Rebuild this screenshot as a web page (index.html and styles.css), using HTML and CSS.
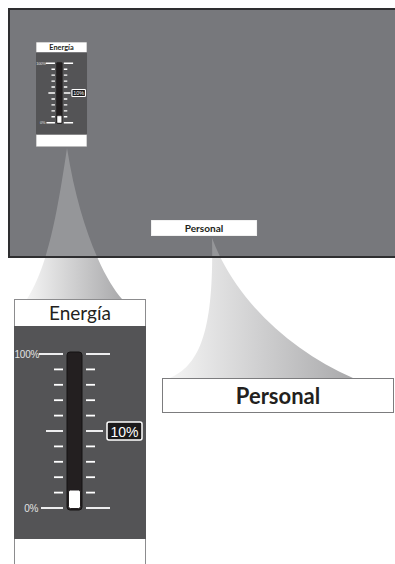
FILE: index.html
```html
<!DOCTYPE html>
<html lang="es">
<head>
    <meta charset="UTF-8">
    <meta name="viewport" content="width=device-width, initial-scale=1.0">
    <title>Energía - Personal</title>
    <link rel="stylesheet" href="styles.css">
</head>
<body>
    <!-- Conos de ampliación entre la pantalla y los detalles -->
    <svg class="cones" width="395" height="564" viewBox="0 0 395 564">
        <defs>
            <linearGradient id="cone-left" gradientUnits="userSpaceOnUse" x1="27" y1="0" x2="122" y2="0">
                <stop offset="0" stop-color="#f4f4f4"/>
                <stop offset="1" stop-color="#a9a9ab"/>
            </linearGradient>
            <linearGradient id="cone-right" gradientUnits="userSpaceOnUse" x1="170" y1="0" x2="353" y2="0">
                <stop offset="0" stop-color="#f4f4f4"/>
                <stop offset="1" stop-color="#a9a9ab"/>
            </linearGradient>
            <clipPath id="in-screen"><rect x="0" y="0" width="395" height="256"/></clipPath>
            <clipPath id="out-screen"><rect x="0" y="258" width="395" height="306"/></clipPath>
        </defs>
        <g clip-path="url(#in-screen)" opacity="0.22">
            <path d="M67 148 C55 230 45 270 27 299 L122 299 C105 280 80 230 67 148 Z" fill="#fff"/>
            <path d="M212 238 C214 330 200 365 170 378 L353 378 C290 350 235 300 212 238 Z" fill="#fff"/>
        </g>
        <g clip-path="url(#out-screen)">
            <path d="M67 148 C55 230 45 270 27 299 L122 299 C105 280 80 230 67 148 Z" fill="url(#cone-left)"/>
            <path d="M212 238 C214 330 200 365 170 378 L353 378 C290 350 235 300 212 238 Z" fill="url(#cone-right)"/>
        </g>
    </svg>

    <!-- Pantalla del televisor -->
    <div class="screen">
        <div class="mini mini-panel">
            <div class="panel">
                <div class="panel-title">Energía</div>
                <div class="panel-body">
                    <svg width="132" height="213" viewBox="0 0 132 213">
                        <g class="ticks" stroke="#fff" stroke-width="1.8">
                            <line x1="25" y1="28" x2="49" y2="28"/><line x1="72" y1="28" x2="96" y2="28"/>
                            <line x1="40" y1="43.4" x2="49" y2="43.4"/><line x1="72" y1="43.4" x2="81" y2="43.4"/>
                            <line x1="40" y1="58.8" x2="49" y2="58.8"/><line x1="72" y1="58.8" x2="81" y2="58.8"/>
                            <line x1="40" y1="74.2" x2="49" y2="74.2"/><line x1="72" y1="74.2" x2="81" y2="74.2"/>
                            <line x1="40" y1="89.6" x2="49" y2="89.6"/><line x1="72" y1="89.6" x2="81" y2="89.6"/>
                            <line x1="32" y1="105" x2="49" y2="105"/><line x1="72" y1="105" x2="89" y2="105"/>
                            <line x1="40" y1="120.4" x2="49" y2="120.4"/><line x1="72" y1="120.4" x2="81" y2="120.4"/>
                            <line x1="40" y1="135.8" x2="49" y2="135.8"/><line x1="72" y1="135.8" x2="81" y2="135.8"/>
                            <line x1="40" y1="151.2" x2="49" y2="151.2"/><line x1="72" y1="151.2" x2="81" y2="151.2"/>
                            <line x1="40" y1="166.6" x2="49" y2="166.6"/><line x1="72" y1="166.6" x2="81" y2="166.6"/>
                            <line x1="27" y1="182" x2="49" y2="182"/><line x1="72" y1="182" x2="96" y2="182"/>
                        </g>
                        <rect x="53" y="26" width="15" height="158" rx="3" fill="#231f20" stroke="#141213" stroke-width="1"/>
                        <rect x="54.5" y="164" width="12" height="18.5" rx="2" fill="#fff" stroke="#231f20" stroke-width="1"/>
                        <text class="gauge-label" x="25" y="31.5" text-anchor="end">100%</text>
                        <text class="gauge-label" x="24" y="185.5" text-anchor="end">0%</text>
                        <rect class="value-box" x="93" y="96" width="35" height="18" rx="2" fill="#1c1a1b" stroke="#fff" stroke-width="1.5"/>
                        <text class="gauge-value" x="110.5" y="110.5" text-anchor="middle">10%</text>
                    </svg>
                </div>
                <div class="panel-foot"></div>
            </div>
        </div>

        <div class="mini mini-personal">
            <div class="personal">Personal</div>
        </div>
    </div>

    <!-- Detalles ampliados -->
    <div class="detail">
        <div class="panel">
            <div class="panel-title">Energía</div>
            <div class="panel-body">
                <svg width="132" height="213" viewBox="0 0 132 213">
                    <g class="ticks" stroke="#fff" stroke-width="1.8">
                        <line x1="25" y1="28" x2="49" y2="28"/><line x1="72" y1="28" x2="96" y2="28"/>
                        <line x1="40" y1="43.4" x2="49" y2="43.4"/><line x1="72" y1="43.4" x2="81" y2="43.4"/>
                        <line x1="40" y1="58.8" x2="49" y2="58.8"/><line x1="72" y1="58.8" x2="81" y2="58.8"/>
                        <line x1="40" y1="74.2" x2="49" y2="74.2"/><line x1="72" y1="74.2" x2="81" y2="74.2"/>
                        <line x1="40" y1="89.6" x2="49" y2="89.6"/><line x1="72" y1="89.6" x2="81" y2="89.6"/>
                        <line x1="32" y1="105" x2="49" y2="105"/><line x1="72" y1="105" x2="89" y2="105"/>
                        <line x1="40" y1="120.4" x2="49" y2="120.4"/><line x1="72" y1="120.4" x2="81" y2="120.4"/>
                        <line x1="40" y1="135.8" x2="49" y2="135.8"/><line x1="72" y1="135.8" x2="81" y2="135.8"/>
                        <line x1="40" y1="151.2" x2="49" y2="151.2"/><line x1="72" y1="151.2" x2="81" y2="151.2"/>
                        <line x1="40" y1="166.6" x2="49" y2="166.6"/><line x1="72" y1="166.6" x2="81" y2="166.6"/>
                        <line x1="27" y1="182" x2="49" y2="182"/><line x1="72" y1="182" x2="96" y2="182"/>
                    </g>
                    <rect x="53" y="26" width="15" height="158" rx="3" fill="#231f20" stroke="#141213" stroke-width="1"/>
                    <rect x="54.5" y="164" width="12" height="18.5" rx="2" fill="#fff" stroke="#231f20" stroke-width="1"/>
                    <text class="gauge-label" x="25" y="31.5" text-anchor="end">100%</text>
                    <text class="gauge-label" x="24" y="185.5" text-anchor="end">0%</text>
                    <rect class="value-box" x="93" y="96" width="35" height="18" rx="2" fill="#1c1a1b" stroke="#fff" stroke-width="1.5"/>
                    <text class="gauge-value" x="110.5" y="110.5" text-anchor="middle">10%</text>
                </svg>
            </div>
            <div class="panel-foot"></div>
        </div>

        <div class="personal personal-large">Personal</div>
    </div>
</body>
</html>
```

FILE: styles.css
```css
html, body {
    margin: 0;
    padding: 0;
}

body {
    position: relative;
    width: 395px;
    height: 564px;
    overflow: hidden;
    background-color: #fff;
    font-family: Lato, "Open Sans", sans-serif;
    color: #231f20;
}

.cones {
    position: absolute;
    top: 0;
    left: 0;
    z-index: 2;
    pointer-events: none;
}

/* Pantalla */
.screen {
    box-sizing: border-box;
    width: 400px;
    height: 250px;
    margin: 8px 0 0 8px;
    padding: 32px 0 0 26px;
    background-color: #77787c;
    border: 2px solid #2e2e30;
    border-right: none;
}

.mini {
    position: relative;
}

.mini-panel {
    width: 51px;
    height: 105px;
}

.mini-panel .panel {
    transform: scale(0.3864);
    transform-origin: 0 0;
}

.mini-panel .panel-title {
    font-weight: bold;
}

.mini-panel .ticks {
    stroke-width: 3.6;
}

.mini-panel .value-box {
    stroke-width: 3;
}

.mini-personal {
    width: 106px;
    height: 16px;
    margin: 73px 0 0 115px;
}

.mini-personal .personal {
    transform: scale(0.457);
    transform-origin: 0 0;
    border-color: #e0e0e0;
}

/* Panel de energía */
.panel {
    width: 132px;
    flex-shrink: 0;
}

.panel-title {
    box-sizing: border-box;
    height: 27px;
    line-height: 26px;
    text-align: center;
    font-size: 19px;
    background-color: #fff;
    border: 1px solid #8c8c8e;
    border-bottom: none;
}

.panel-body {
    height: 213px;
    background-color: #545456;
}

.panel-body svg {
    display: block;
}

.panel-foot {
    box-sizing: border-box;
    height: 31px;
    background-color: #fff;
    border: 1px solid #8c8c8e;
    border-top: none;
}

.gauge-label {
    font-family: "Liberation Sans", Arial, sans-serif;
    font-size: 10px;
    letter-spacing: -0.3px;
    fill: #e2e2e2;
}

.gauge-value {
    font-family: "Liberation Sans", Arial, sans-serif;
    font-size: 14px;
    fill: #fff;
}

/* Modo Personal */
.personal {
    box-sizing: border-box;
    width: 232px;
    height: 35px;
    line-height: 33px;
    text-align: center;
    font-size: 22px;
    font-weight: bold;
    background-color: #fff;
    border: 1px solid #7c7c7e;
}

/* Zona de detalle */
.detail {
    display: flex;
    align-items: flex-start;
    gap: 16px;
    padding: 41px 0 0 14px;
}

.personal-large {
    margin-top: 79px;
}
```
